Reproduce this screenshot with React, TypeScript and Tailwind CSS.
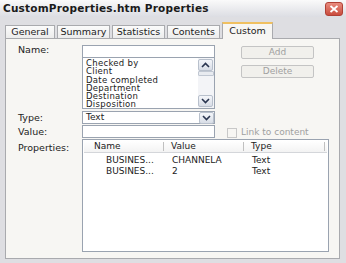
import React from "react";

const font = { fontFamily: '"DejaVu Sans", Verdana, sans-serif' };

function ScrollBtn({ up }: { up?: boolean }) {
  return (
    <div className="w-[15px] h-[12px] border border-[#b8c0cc] rounded-[2px] bg-gradient-to-b from-[#f4f6fa] to-[#d8dde6] flex items-center justify-center">
      <svg width="9" height="6" viewBox="0 0 9 6">
        <path d={up ? "M1 5 L4.5 1.5 L8 5" : "M1 1 L4.5 4.5 L8 1"} stroke="#2a3550" strokeWidth="1.6" fill="none" />
      </svg>
    </div>
  );
}

function Tab({ label, selected, w }: { label: string; selected?: boolean; w: string }) {
  if (selected) {
    return (
      <div className={`${w} h-[17px] -mb-px bg-[#f7f6f3] border border-b-0 border-[#a9aaae] border-t-[2px] border-t-[#f0c060] text-[9.5px] leading-[13px] text-[#222] z-10 text-center`}>
        {label}
      </div>
    );
  }
  return (
    <div className={`${w} h-[13px] bg-gradient-to-b from-[#fbfbfb] to-[#ececec] border border-b-0 border-[#a9aaae] text-[9.5px] leading-[12px] text-[#222] mr-[2px] text-center`}>
      {label}
    </div>
  );
}

export default function App() {
  const items = ["Checked by", "Client", "Date completed", "Department", "Destination", "Disposition"];
  return (
    <div className="w-[346px] h-[263px] bg-[#dedee2] overflow-hidden" style={font}>
      <div className="h-[17px] bg-gradient-to-b from-[#fafafa] to-[#dcdde3] flex items-center justify-between pl-[3px] pr-[3px]">
        <span className="text-[10.5px] font-bold text-[#1a1a1a] tracking-[0.2px]">CustomProperties.htm Properties</span>
        <div className="w-[18px] h-[14px] rounded-[3px] bg-gradient-to-b from-[#e88b7e] to-[#c94b3d] border border-[#b04035] flex items-center justify-center">
          <svg width="10" height="8" viewBox="0 0 10 8">
            <path d="M1.5 1 L8.5 7 M8.5 1 L1.5 7" stroke="white" strokeWidth="1.8" />
          </svg>
        </div>
      </div>
      <div className="flex items-end ml-[5px] mt-[5px] h-[16px]">
        <Tab label="General" w="w-[50px]" />
        <Tab label="Summary" w="w-[53px]" />
        <Tab label="Statistics" w="w-[53px]" />
        <Tab label="Contents" w="w-[53px]" />
        <Tab label="Custom" w="w-[51px]" selected />
      </div>
      <div className="ml-[5px] w-[335px] h-[221px] bg-[#f7f6f3] border border-[#a9aaae] pl-[12px] pt-[6px] text-[9.5px] text-[#222]">
        <div className="flex">
          <div className="flex flex-col">
            <div className="flex">
              <div className="w-[64px] h-[13px] leading-[10px]">Name:</div>
              <div className="flex flex-col w-[133px]">
                <div className="h-[13px] bg-white border border-[#9aa3b0]" />
                <div className="h-[51px] bg-white border border-[#9aa3b0] border-t-0 flex">
                  <div className="flex-1 pl-[3px] pt-[1px] leading-[8.3px] text-[8.5px] tracking-[0.3px]">
                    {items.map((t) => (
                      <div key={t} className="h-[8.3px]">{t}</div>
                    ))}
                  </div>
                  <div className="w-[16px] flex flex-col bg-[#f3f4f7] pt-[1px] pb-[1px]">
                    <ScrollBtn up />
                    <div className="h-[5px] border border-[#c0c7d2] bg-[#e8ebf0] rounded-[1px]" />
                    <div className="flex-1" />
                    <ScrollBtn />
                  </div>
                </div>
              </div>
            </div>
            <div className="flex mt-[2px]">
              <div className="w-[64px] h-[13px] leading-[13px]">Type:</div>
              <div className="w-[133px] h-[13px] bg-white border border-[#9aa3b0] flex items-center justify-between pl-[3px]">
                <span className="text-[9px] leading-[11px]">Text</span>
                <ScrollBtn />
              </div>
            </div>
            <div className="flex mt-[1px]">
              <div className="w-[64px] h-[13px] leading-[13px]">Value:</div>
              <div className="w-[133px] h-[13px] bg-white border border-[#9aa3b0]" />
            </div>
          </div>
          <div className="flex flex-col ml-[26px] pt-[1px]">
            <div className="w-[73px] h-[13px] border border-[#c4c4c4] rounded-[2px] bg-[#f1f0ec] text-[#a0a0a0] flex items-center justify-center text-[9px] leading-[11px]">Add</div>
            <div className="w-[73px] h-[13px] mt-[6px] border border-[#c4c4c4] rounded-[2px] bg-[#f1f0ec] text-[#a0a0a0] flex items-center justify-center text-[9px] leading-[11px]">Delete</div>
            <div className="flex items-center mt-[49px] -ml-[14px] h-[11px]">
              <div className="w-[10px] h-[10px] border border-[#c8c8c8] bg-[#f7f6f3]" />
              <span className="ml-[4px] text-[#a0a0a0] text-[9px] leading-[11px]">Link to content</span>
            </div>
          </div>
        </div>
        <div className="flex mt-[1px]">
          <div className="w-[64px] pt-[3px] leading-[11px]">Properties:</div>
          <div className="w-[247px] h-[113px] bg-white border border-[#9aa3b0] pt-[1px] px-[1px]">
            <div className="h-[12px] flex border-b border-[#d4d6da] bg-gradient-to-b from-white to-[#f3f3f3] text-[9px] leading-[11px]">
              <div className="w-[80px] pl-[10px] border-r border-[#c0c0c0] my-[1px] leading-[9px]">Name</div>
              <div className="w-[80px] pl-[7px] border-r border-[#c0c0c0] my-[1px] leading-[9px]">Value</div>
              <div className="w-[81px] pl-[7px] border-r border-[#c0c0c0] my-[1px] leading-[9px]">Type</div>
            </div>
            <div className="text-[9px] leading-[11px] mt-[2px]">
              <div className="flex">
                <div className="w-[88px] pl-[22px]">BUSINES...</div>
                <div className="w-[80px]">CHANNELA</div>
                <div>Text</div>
              </div>
              <div className="flex">
                <div className="w-[88px] pl-[22px]">BUSINES...</div>
                <div className="w-[80px]">2</div>
                <div>Text</div>
              </div>
            </div>
          </div>
        </div>
      </div>
    </div>
  );
}
